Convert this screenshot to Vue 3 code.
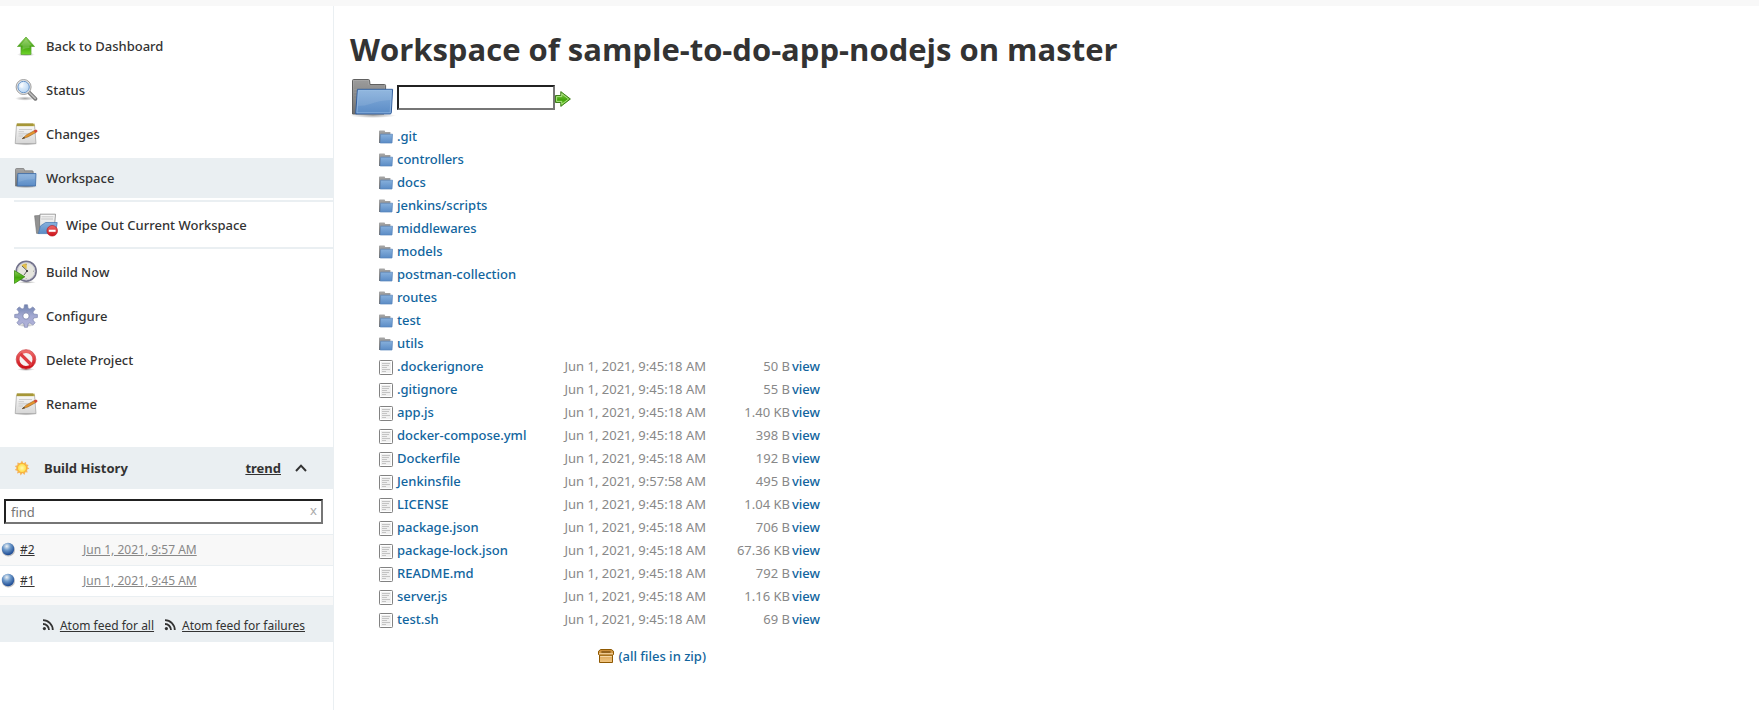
<script setup>
import { ref } from 'vue'

const path = ref('')
const query = ref('')

const topTasks = [
  { label: 'Back to Dashboard', icon: 'up' },
  { label: 'Status', icon: 'search' },
  { label: 'Changes', icon: 'notepad' },
  { label: 'Workspace', icon: 'folder', active: true },
]
const bottomTasks = [
  { label: 'Build Now', icon: 'clock' },
  { label: 'Configure', icon: 'gear' },
  { label: 'Delete Project', icon: 'stop' },
  { label: 'Rename', icon: 'notepad' },
]
const builds = [
  { id: '#2', date: 'Jun 1, 2021, 9:57 AM' },
  { id: '#1', date: 'Jun 1, 2021, 9:45 AM' },
]
const folders = [
  '.git', 'controllers', 'docs', 'jenkins/scripts', 'middlewares',
  'models', 'postman-collection', 'routes', 'test', 'utils',
]
const stamp = 'Jun 1, 2021, 9:45:18 AM'
const files = [
  { name: '.dockerignore', date: stamp, size: '50 B' },
  { name: '.gitignore', date: stamp, size: '55 B' },
  { name: 'app.js', date: stamp, size: '1.40 KB' },
  { name: 'docker-compose.yml', date: stamp, size: '398 B' },
  { name: 'Dockerfile', date: stamp, size: '192 B' },
  { name: 'Jenkinsfile', date: 'Jun 1, 2021, 9:57:58 AM', size: '495 B' },
  { name: 'LICENSE', date: stamp, size: '1.04 KB' },
  { name: 'package.json', date: stamp, size: '706 B' },
  { name: 'package-lock.json', date: stamp, size: '67.36 KB' },
  { name: 'README.md', date: stamp, size: '792 B' },
  { name: 'server.js', date: stamp, size: '1.16 KB' },
  { name: 'test.sh', date: stamp, size: '69 B' },
]
</script>

<template>
  <div class="page">
    <svg class="sprite" aria-hidden="true">
      <defs>
        <linearGradient id="gGreen" x1="0" y1="0" x2="0" y2="1">
          <stop offset="0" stop-color="#8fd05a" /><stop offset="0.55" stop-color="#43a50c" /><stop offset="1" stop-color="#6fd52a" />
        </linearGradient>
        <linearGradient id="gBlue" x1="0" y1="0" x2="0" y2="1">
          <stop offset="0" stop-color="#87b0dc" /><stop offset="1" stop-color="#5b8cc6" />
        </linearGradient>
        <linearGradient id="gGrey" x1="0" y1="0" x2="0" y2="1">
          <stop offset="0" stop-color="#a8a8a8" /><stop offset="1" stop-color="#6e6e6e" />
        </linearGradient>
        <linearGradient id="gPaper" x1="0" y1="0" x2="0" y2="1">
          <stop offset="0" stop-color="#fafafa" /><stop offset="1" stop-color="#d6d6d6" />
        </linearGradient>
        <linearGradient id="gGear" x1="0" y1="0" x2="0" y2="1">
          <stop offset="0" stop-color="#6e82ae" /><stop offset="0.5" stop-color="#a3a9d2" /><stop offset="1" stop-color="#b4b4da" />
        </linearGradient>
        <linearGradient id="gRed" x1="0" y1="0" x2="0" y2="1">
          <stop offset="0" stop-color="#ee6a6a" /><stop offset="1" stop-color="#cc1018" />
        </linearGradient>
        <linearGradient id="gBox" x1="0" y1="0" x2="0" y2="1">
          <stop offset="0" stop-color="#c98b35" /><stop offset="1" stop-color="#f2c783" />
        </linearGradient>
        <radialGradient id="gLens" cx="0.4" cy="0.35" r="0.7">
          <stop offset="0" stop-color="#eef6fd" /><stop offset="1" stop-color="#b4d3f2" />
        </radialGradient>
        <radialGradient id="gBall" cx="0.4" cy="0.28" r="0.7">
          <stop offset="0" stop-color="#eef2f4" /><stop offset="0.45" stop-color="#6d99ca" /><stop offset="1" stop-color="#1d4b94" />
        </radialGradient>
        <radialGradient id="gSun">
          <stop offset="0" stop-color="#fffbb0" /><stop offset="1" stop-color="#ffd83c" />
        </radialGradient>
        <radialGradient id="gShade">
          <stop offset="0" stop-color="#000" stop-opacity="0.35" /><stop offset="1" stop-color="#000" stop-opacity="0" />
        </radialGradient>

        <symbol id="up" viewBox="0 0 24 24">
          <ellipse cx="12" cy="20.5" rx="9" ry="2" fill="url(#gShade)" />
          <path d="M12 3 L20.5 12.5 H17 V20.5 H7 V12.5 H3.5 Z" fill="url(#gGreen)" stroke="#5fa838" stroke-width="0.8" stroke-linejoin="round" />
          <path d="M12 5 L18 11.6 H15.6 V14 Q10 14 8.5 16 V11.6 H6 Z" fill="#fff" opacity="0.2" />
        </symbol>
        <symbol id="search" viewBox="0 0 24 24">
          <ellipse cx="11" cy="20.5" rx="10" ry="2.2" fill="url(#gShade)" />
          <path d="M15 14.4 L21.4 20.8" stroke="#777" stroke-width="3.8" stroke-linecap="round" />
          <path d="M15 14.4 L21.2 20.4" stroke="#bdbdbd" stroke-width="1.6" stroke-linecap="round" />
          <circle cx="9.6" cy="9" r="7.5" fill="#e6e6e6" stroke="#969696" stroke-width="0.9" />
          <circle cx="9.6" cy="9" r="5.7" fill="url(#gLens)" stroke="#5c8cc4" stroke-width="0.9" />
          <path d="M5.4 9 Q6 5 10 4.6 Q8 7 8.6 10 Z" fill="#fff" opacity="0.6" />
        </symbol>
        <symbol id="notepad" viewBox="0 0 24 24">
          <ellipse cx="12" cy="22" rx="12" ry="1.6" fill="url(#gShade)" />
          <path d="M2.5 3 H20.5 L22 21.5 H1.2 Z" fill="url(#gPaper)" stroke="#a0a0a0" stroke-width="0.7" />
          <rect x="2.6" y="1.6" width="18" height="2.6" fill="#b8a845" />
          <path d="M4 1 V4 M6 1 V4 M8 1 V4 M10 1 V4 M12 1 V4 M14 1 V4 M16 1 V4 M18 1 V4" stroke="#8d7e24" stroke-width="0.8" />
          <path d="M5 7.5 H18 M4.5 9.7 H10 M4.5 11.8 H16 M4.5 14 H9" stroke="#c4c4c4" stroke-width="0.8" />
          <path d="M8 16.8 L12.4 12.9 L20.4 8.6 L21.8 10.6 L14 14.9 Z" fill="#e5952f" stroke="#8a5a18" stroke-width="0.5" />
          <path d="M8 16.8 L10 14.9 L11.2 16.3 Z" fill="#333" />
          <path d="M19.8 8.6 L21.4 11 L23.4 9.8 Q23.8 7.8 21.9 7.5 Z" fill="#d44a3c" />
        </symbol>
        <symbol id="folder" viewBox="0 0 24 24">
          <ellipse cx="12" cy="20.7" rx="12" ry="1.5" fill="url(#gShade)" />
          <path d="M1.5 20 V3.6 Q1.5 2.5 2.6 2.5 H9.3 Q10.2 2.5 10.3 3.6 L10.5 4.8 H18.2 Q19.2 4.8 19.2 5.8 V20 Z" fill="url(#gGrey)" stroke="#747474" stroke-width="0.7" />
          <path d="M3.8 7.5 H22 L21.5 20 H3.2 Z" fill="url(#gBlue)" stroke="#3d6ba5" stroke-width="0.8" />
          <path d="M4.7 8.4 H21 L20.6 13 Q12 13 4.5 16 Z" fill="#fff" opacity="0.1" />
        </symbol>
        <symbol id="bigfolder" viewBox="0 0 48 48">
          <ellipse cx="23" cy="41.5" rx="23" ry="2.5" fill="url(#gShade)" />
          <path d="M2.5 40 V6.6 Q2.5 5.5 3.6 5.5 H18.4 Q19.5 5.5 19.6 6.8 L20 10.5 H34.6 Q35.6 10.5 35.6 11.6 V15 L34 40 Z" fill="url(#gGrey)" stroke="#606060" />
          <path d="M4 8 H18 M4 10 H18 M4 12 H34 M4 14 H34 M4 17 H8 M4 20 H8 M4 23 H7" stroke="#777" stroke-width="0.7" opacity="0.6" />
          <path d="M7.4 15.3 H42.6 L41.3 38.8 Q41.2 39.9 40 39.9 H5.7 Z" fill="url(#gBlue)" stroke="#345f9d" />
          <path d="M8.5 16.4 H41.4 L40.8 26 Q28 26.8 21 29.7 Q15 32 7.6 32 Z" fill="#fff" opacity="0.1" />
          <path d="M8.4 16.4 H41.4 L40.2 38.8 H6.9 Z" fill="none" stroke="#9dc0e6" stroke-width="0.8" opacity="0.8" />
        </symbol>
        <symbol id="wipe" viewBox="0 0 24 24">
          <path d="M4.5 18 L6 1.2 H21.5 L20.5 13 Z" fill="url(#gPaper)" stroke="#888" stroke-width="0.8" />
          <path d="M7.5 3.8 H19.5 M7.2 6 H19" stroke="#bbb" stroke-width="0.8" />
          <path d="M0.6 2.8 L5.8 2.4 L5.4 20.4 H2.6 Z" fill="#929292" stroke="#6e6e6e" stroke-width="0.6" />
          <path d="M4.4 20.6 L6.4 13 L11.6 9.5 H23.2 L21.5 20.6 Z" fill="url(#gBlue)" stroke="#4476b1" stroke-width="0.7" />
          <circle cx="18.2" cy="17.8" r="5.3" fill="url(#gRed)" stroke="#b41118" stroke-width="0.6" />
          <rect x="14.8" y="16.7" width="6.8" height="2.1" fill="#fff" />
        </symbol>
        <symbol id="clock" viewBox="0 0 24 24">
          <ellipse cx="13" cy="22.3" rx="9" ry="1.4" fill="url(#gShade)" />
          <circle cx="12.2" cy="11.2" r="9.9" fill="#e6e6de" stroke="#72728b" stroke-width="1.7" />
          <circle cx="12.2" cy="11.2" r="8.7" fill="none" stroke="#c2c2d2" stroke-width="0.8" />
          <path d="M12.6 9.6 L7.4 5.2 Q10 3.2 12.8 3.6 Z" fill="#e2bf4a" />
          <path d="M8 6 L13.2 10.8 L10 15" fill="none" stroke="#555" stroke-width="0.9" />
          <circle cx="13" cy="11" r="1.1" fill="#333" />
          <path d="M12.2 4 V5 M19 11.2 H20 M12.2 18.3 V19" stroke="#888" stroke-width="0.8" />
          <path d="M0.5 10.6 L10.8 16.8 L0.5 23.4 Z" fill="url(#gGreen)" stroke="#378a10" stroke-width="0.8" />
        </symbol>
        <symbol id="gear" viewBox="0 0 24 24">
          <ellipse cx="12" cy="21.2" rx="9" ry="1.8" fill="url(#gShade)" />
          <path fill="url(#gGear)" stroke="#8088b0" stroke-width="0.7" stroke-linejoin="round" fill-rule="evenodd" d="M10.5 0.8 H13.5 L14.1 4.4 L16 5.1 L18.8 2.9 L21.1 5.2 L18.9 8 L19.6 10 L23.4 10.5 V13.5 L19.7 14 L18.9 16 L21.1 18.8 L18.8 21.1 L16 18.9 L14.1 19.6 L13.5 23.3 H10.5 L9.9 19.6 L8 18.9 L5.2 21.1 L2.9 18.8 L5.1 16 L4.4 14 L0.7 13.5 V10.5 L4.4 10 L5.1 8 L2.9 5.2 L5.2 2.9 L8 5.1 L9.9 4.4 Z M12 8.9 A3.1 3.1 0 1 0 12 15.1 A3.1 3.1 0 1 0 12 8.9 Z" />
          <circle cx="12" cy="12" r="3.2" fill="#fff" stroke="#8088b0" stroke-width="0.9" />
        </symbol>
        <symbol id="stop" viewBox="0 0 24 24">
          <ellipse cx="12" cy="21.4" rx="9" ry="1.6" fill="url(#gShade)" />
          <circle cx="12" cy="11.4" r="8.1" fill="#f7f2f2" stroke="url(#gRed)" stroke-width="3.2" />
          <path d="M6.4 5.8 L17.6 17" stroke="#dd3a40" stroke-width="3.2" />
          <circle cx="12" cy="11.4" r="9.8" fill="none" stroke="#c4262c" stroke-width="0.6" />
        </symbol>
        <symbol id="sun" viewBox="0 0 16 16">
          <path d="M8 0.6 L9.4 3.2 L12 2 L12.2 4.2 L14.6 5 L13.4 7 L15.4 8.6 L13 9.8 L13.6 12.4 L11.4 12.2 L10.4 15 L8.6 13 L6.6 15.4 L5.8 12.8 L3 13.4 L3.6 11 L0.8 10 L2.6 8 L0.8 6 L3.4 5.2 L3.4 2.4 L6.2 3.2 Z" fill="#f6b45c" />
          <circle cx="8" cy="8" r="4.6" fill="url(#gSun)" stroke="#f5ab31" stroke-width="0.7" />
        </symbol>
        <symbol id="ball" viewBox="0 0 16 16">
          <circle cx="8.4" cy="8.9" r="6.6" fill="#8a8a8a" opacity="0.5" />
          <circle cx="8" cy="8" r="6.2" fill="url(#gBall)" />
        </symbol>
        <symbol id="rss" viewBox="0 0 12 12">
          <circle cx="2.4" cy="9.6" r="1.6" fill="#333" />
          <path d="M1 5 A6 6 0 0 1 7 11 M1 1.2 A9.8 9.8 0 0 1 10.8 11" fill="none" stroke="#333" stroke-width="1.8" />
        </symbol>
        <symbol id="smallfolder" viewBox="0 0 16 16">
          <path d="M1 14 V2.2 Q1 1.5 1.8 1.5 H6.6 L7.2 3 H12.4 V14 Z" fill="url(#gGrey)" />
          <path d="M2.6 5.2 H14.5 L14 14 H2.2 Z" fill="url(#gBlue)" stroke="#5784ba" stroke-width="0.7" />
        </symbol>
        <symbol id="doc" viewBox="0 0 16 16">
          <rect x="1.5" y="1.5" width="13" height="14" rx="0.8" fill="#f0f0f0" stroke="#828282" />
          <rect x="2.5" y="2.5" width="11" height="12" fill="none" stroke="#fff" />
          <path d="M4 4.5 H12 M4 6.5 H11 M4 8.5 H9 M4 10.5 H12 M4 12.5 H8" stroke="#c4c4c4" />
        </symbol>
        <symbol id="go" viewBox="0 0 16 16">
          <path d="M0.5 4.5 H5.8 V0.6 L15.4 8 L5.8 15.4 V11.5 H0.5 Z" fill="url(#gGreen)" stroke="#3f7d1c" stroke-linejoin="round" />
          <path d="M1.6 5.6 H6.8 V2.8 L13.6 8 L6.8 13.2 V10.4 H1.6 Z" fill="none" stroke="#b5e58e" stroke-width="0.9" />
        </symbol>
        <symbol id="box" viewBox="0 0 16 16">
          <path d="M0.5 6.5 V3.2 L2.6 1.5 H13.4 L15.5 3.2 V6.5 L14.5 7.5 V14.5 H1.5 V7.5 Z" fill="url(#gBox)" stroke="#8f5902" />
          <path d="M3.4 3.4 H12.6 V4.6 H3.4 Z" fill="#6b4205" />
          <path d="M1 5.8 H15 M2.2 8.4 H13.8" stroke="#f8dcae" />
          <path d="M1 7.2 H15" stroke="#8f5902" />
        </symbol>
      </defs>
    </svg>

    <div class="topbar"></div>
    <div class="columns">
      <aside class="side">
        <nav class="tasks">
          <a v-for="t in topTasks" :key="t.label" href="#" class="task" :class="{ active: t.active }">
            <svg class="i24"><use :href="'#' + t.icon" /></svg>{{ t.label }}
          </a>
          <div class="subtasks">
            <a href="#" class="task sub"><svg class="i24"><use href="#wipe" /></svg>Wipe Out Current Workspace</a>
          </div>
          <a v-for="t in bottomTasks" :key="t.label" href="#" class="task">
            <svg class="i24"><use :href="'#' + t.icon" /></svg>{{ t.label }}
          </a>
        </nav>

        <section class="history">
          <header class="history-head">
            <svg class="i16"><use href="#sun" /></svg>
            <h2>Build History</h2>
            <a href="#" class="trend">trend</a>
            <button type="button" class="collapse" aria-label="Collapse">
              <svg viewBox="0 0 12 12"><path d="M1 9 L6 3.6 L11 9" fill="none" stroke="#333" stroke-width="2" /></svg>
            </button>
          </header>
          <div class="find">
            <input v-model="query" type="text" placeholder="find" aria-label="Find build" />
            <button type="button" aria-label="Clear" @click="query = ''">x</button>
          </div>
          <ul class="builds">
            <li v-for="b in builds" :key="b.id">
              <svg class="i16"><use href="#ball" /></svg>
              <a href="#" class="num">{{ b.id }}</a>
              <a href="#" class="when">{{ b.date }}</a>
            </li>
          </ul>
          <footer class="feeds">
            <a href="#"><svg><use href="#rss" /></svg><span>Atom feed for all</span></a>
            <a href="#"><svg><use href="#rss" /></svg><span>Atom feed for failures</span></a>
          </footer>
        </section>
      </aside>

      <main class="main">
        <h1>Workspace of sample-to-do-app-nodejs on master</h1>
        <form class="path" @submit.prevent>
          <svg class="i48"><use href="#bigfolder" /></svg>
          <input v-model="path" type="text" aria-label="Path" />
          <button type="submit" aria-label="Go"><svg class="i16"><use href="#go" /></svg></button>
        </form>
        <table class="files">
          <colgroup><col class="c-icon" /><col class="c-name" /><col class="c-date" /><col class="c-size" /><col class="c-view" /></colgroup>
          <tbody>
            <tr v-for="f in folders" :key="f">
              <td class="icon"><svg class="i16"><use href="#smallfolder" /></svg></td>
              <td colspan="4"><a href="#">{{ f }}</a></td>
            </tr>
            <tr v-for="f in files" :key="f.name">
              <td class="icon"><svg class="i16"><use href="#doc" /></svg></td>
              <td><a href="#">{{ f.name }}</a></td>
              <td class="right">{{ f.date }}</td>
              <td class="right">{{ f.size }}</td>
              <td class="view"><a href="#">view</a></td>
            </tr>
            <tr class="zip">
              <td colspan="3"><a href="#"><svg class="i16"><use href="#box" /></svg>(all files in zip)</a></td>
              <td colspan="2"></td>
            </tr>
          </tbody>
        </table>
      </main>
    </div>
  </div>
</template>

<style>
body {
  margin: 0;
  background: #fff;
}
</style>

<style scoped>
.page {
  display: flex;
  flex-direction: column;
  min-height: 100vh;
  font-family: "Noto Sans", "Open Sans", sans-serif;
  font-size: 13px;
  color: #333;
}
.sprite { position: absolute; width: 0; height: 0; }
.i16 { display: block; flex: none; width: 16px; height: 16px; }
.i24 { display: block; flex: none; width: 24px; height: 24px; }
.i48 { display: block; flex: none; width: 48px; height: 48px; }
.topbar { height: 6px; background: #f8f8f8; }
.columns { display: flex; flex: 1; }
.side {
  flex: none;
  width: 333px;
  border-right: 1px solid #eaeff2;
}
.tasks {
  display: flex;
  flex-direction: column;
  gap: 4px;
  padding-top: 20px;
}
.task {
  display: flex;
  align-items: center;
  gap: 8px;
  height: 40px;
  padding-left: 14px;
  font-weight: 500;
  color: #333;
  text-decoration: none;
}
.task.active { background: #eaeff2; }
.subtasks {
  margin: -2px 0 -1px 14px;
  padding: 3px 0 2px;
  border-top: 2px solid #eaeff2;
  border-bottom: 2px solid #eaeff2;
}
.task.sub { padding-left: 20px; }
.history { margin-top: 23px; }
.history-head {
  display: flex;
  align-items: center;
  height: 42px;
  padding: 0 26px 0 14px;
  background: #eaeff2;
}
.history-head h2 {
  flex: 1;
  margin: 0 0 0 14px;
  font-size: 13px;
  font-weight: 700;
}
.trend { font-weight: 700; color: #333; }
.collapse {
  margin-left: 14px;
  padding: 0;
  border: 0;
  background: none;
}
.collapse svg { display: block; width: 12px; height: 12px; }
.find {
  position: relative;
  padding: 10px 10px 10px 4px;
}
.find input {
  display: block;
  box-sizing: border-box;
  width: 100%;
  height: 25px;
  padding: 0 20px 0 5px;
  border: 2px inset #767676;
  background: #fff;
  font: inherit;
}
.find input::placeholder { color: #757575; }
.find button {
  position: absolute;
  top: 11px;
  right: 16px;
  padding: 0;
  border: 0;
  background: none;
  font: inherit;
  line-height: 20px;
  color: #aaa;
}
.builds {
  margin: 0;
  padding: 0 0 8px;
  list-style: none;
  background: #f8f8f8;
}
.builds li {
  display: flex;
  align-items: center;
  box-sizing: border-box;
  height: 31px;
  padding-bottom: 2px;
  border-top: 1px solid #eaeff2;
  font-size: 12px;
}
.builds li:nth-child(2) { height: 32px; background: #fff; border-bottom: 1px solid #eaeff2; }
.num { width: 63px; margin-left: 4px; color: #333; }
.when { color: #888; }
.feeds {
  display: flex;
  align-items: center;
  justify-content: flex-end;
  gap: 10px;
  box-sizing: border-box;
  height: 37px;
  padding: 3px 28px 0 0;
  background: #eaeff2;
  font-size: 12px;
}
.feeds a { display: flex; align-items: center; gap: 6px; color: #333; text-decoration: none; }
.feeds span { text-decoration: underline; }
.feeds svg { width: 12px; height: 12px; }
.main { flex: 1; min-width: 0; padding: 21px 16px; }
h1 {
  margin: 0;
  font-family: "Open Sans", "Noto Sans", sans-serif;
  font-size: 31px;
  line-height: 44px;
  font-weight: 660;
}
.path { display: flex; align-items: center; height: 53px; }
.path .i48 { margin-right: -1px; }
.path input {
  box-sizing: border-box;
  width: 158px;
  height: 25px;
  padding: 0 4px;
  border: 2px inset #767676;
  background: #fff;
  font: inherit;
}
.path button { padding: 2px 0 0; border: 0; background: none; }
.files {
  table-layout: fixed;
  width: 446px;
  margin: 0 0 0 28px;
  border-collapse: collapse;
  color: #888;
}
.c-icon { width: 19px; }
.c-name { width: 150px; }
.c-date { width: 159px; }
.c-size { width: 84px; }
.c-view { width: 34px; }
.files td { height: 23px; padding: 0; line-height: 20px; white-space: nowrap; }
.files .icon { height: 21px; padding-top: 2px; }
.files a { font-weight: 500; color: #11659e; text-decoration: none; }
.files .right { text-align: right; }
.files .view { padding-left: 2px; }
.files .zip td { padding-top: 14px; }
.zip a { display: flex; align-items: center; justify-content: flex-end; gap: 4px; }
</style>
